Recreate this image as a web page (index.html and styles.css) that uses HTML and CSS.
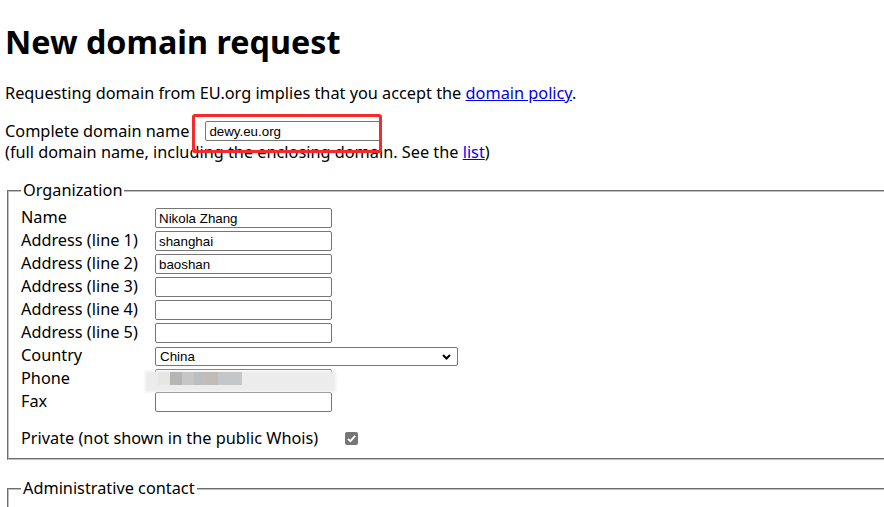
FILE: index.html
```html
<!DOCTYPE html>
<html lang="en">
<head>
<meta charset="utf-8">
<title>New domain request</title>
<link rel="stylesheet" href="styles.css">
</head>
<body>
<div class="page">
  <h1 class="title">New domain request</h1>
  <p class="intro">Requesting domain from EU.org implies that you accept the <a href="#">domain policy</a>.</p>

  <div class="domain-row">
    <span class="domain-label">Complete domain name</span>
    <span class="domain-field">
      <input class="field" type="text" value="dewy.eu.org">
      <span class="highlight"></span>
    </span>
  </div>
  <div class="domain-note">(full domain name, including the enclosing domain. See the <a href="#">list</a>)</div>

  <fieldset class="group">
    <legend class="group-title">Organization</legend>
    <div class="form-grid">
      <label class="lbl">Name</label><input class="field" type="text" value="Nikola Zhang">
      <label class="lbl">Address (line 1)</label><input class="field" type="text" value="shanghai">
      <label class="lbl">Address (line 2)</label><input class="field" type="text" value="baoshan">
      <label class="lbl">Address (line 3)</label><input class="field" type="text" value="">
      <label class="lbl">Address (line 4)</label><input class="field" type="text" value="">
      <label class="lbl">Address (line 5)</label><input class="field" type="text" value="">
      <label class="lbl">Country</label>
      <span class="select-wrap">
        <select class="select"><option>China</option></select>
        <svg class="chevron" width="9" height="6" viewBox="0 0 9 6"><path d="M1 1 L4.5 4.5 L8 1" fill="none" stroke="#000" stroke-width="2"/></svg>
      </span>
      <label class="lbl">Phone</label>
      <span class="phone-wrap">
        <input class="field" type="text" value="">
        <span class="mosaic">
          <span class="m-band"></span>
          <span class="m-cell c1"></span><span class="m-cell c2"></span><span class="m-cell c3"></span><span class="m-cell c4"></span><span class="m-cell c5"></span><span class="m-cell c6"></span>
        </span>
      </span>
      <label class="lbl">Fax</label><input class="field" type="text" value="">
    </div>
    <div class="private-row">
      <span class="private-label">Private (not shown in the public Whois)</span>
      <span class="checkbox"><svg width="13" height="13" viewBox="0 0 13 13"><path d="M3 6.8 L5.4 9.2 L10.2 3.8" fill="none" stroke="#fff" stroke-width="1.9"/></svg></span>
    </div>
  </fieldset>

  <fieldset class="group group-admin">
    <legend class="group-title">Administrative contact</legend>
  </fieldset>
</div>
</body>
</html>
```
FILE: styles.css
```css
html, body {
  margin: 0;
  padding: 0;
  overflow: hidden;
  background: #fff;
}
body {
  font-family: "Noto Sans", "Open Sans", sans-serif;
  font-size: 16.3px;
  line-height: 21px;
  color: #000;
}
.page {
  width: 920px;
  padding-left: 5px;
}
a { color: #0000ee; text-decoration: underline; }

.title {
  font-size: 32.3px;
  line-height: 44px;
  font-weight: 700;
  margin: 19px 0 20px;
}
.intro {
  margin: 0 0 16px;
}

.domain-row {
  display: flex;
  align-items: center;
  height: 22px;
}
.domain-label { margin-right: 16px; }
.domain-field { position: relative; display: inline-flex; }
.highlight {
  position: absolute;
  left: -13px;
  top: -7px;
  width: 190px;
  height: 39px;
  border: 3px solid #f52a2a;
  border-radius: 3px;
  box-sizing: border-box;
}
.domain-note { margin: 0; }

.field {
  box-sizing: border-box;
  width: 177px;
  height: 20px;
  border: 1px solid #767676;
  border-radius: 2px;
  padding: 0 3px;
  font-family: "Liberation Sans", Arial, sans-serif;
  font-size: 13.33px;
  color: #000;
  background: #fff;
  margin: 0;
}

.group {
  margin: 17px 0 0 2px;
  padding: 7px 12px 9px;
  border: 2px groove #c0c0c0;
  min-width: 0;
}
.group-title {
  padding: 0 2px;
  line-height: 21px;
}
.group-admin {
  margin-top: 18px;
  padding: 0 12px 20px;
}

.form-grid {
  display: grid;
  grid-template-columns: 134px auto;
  grid-auto-rows: 20px;
  row-gap: 3px;
  justify-items: start;
  align-items: start;
}
.lbl {
  line-height: 19px;
  white-space: nowrap;
}

.select-wrap {
  position: relative;
  display: flex;
  padding-top: 1px;
}
.select {
  -webkit-appearance: none;
  appearance: none;
  box-sizing: border-box;
  width: 303px;
  height: 19px;
  border: 1px solid #767676;
  border-radius: 2px;
  padding: 0 4px;
  font-family: "Liberation Sans", Arial, sans-serif;
  font-size: 13.33px;
  background: #fff;
  color: #000;
  margin: 0;
}
.chevron {
  position: absolute;
  right: 7px;
  top: 8px;
  pointer-events: none;
}

.phone-wrap { position: relative; display: flex; }
.mosaic {
  position: absolute;
  left: -10px;
  top: -1px;
  width: 191px;
  height: 26px;
  pointer-events: none;
}
.m-band {
  position: absolute;
  left: 0; top: 3px;
  width: 191px; height: 21px;
  background: #ececec;
  filter: blur(1.5px);
}
.m-cell {
  position: absolute;
  top: 4px;
  height: 13px;
  width: 12px;
}
.c1 { left: 13px; background: #e6e6e2; }
.c2 { left: 25px; background: #b5b5b5; }
.c3 { left: 37px; background: #c6c6c6; }
.c4 { left: 49px; background: #bdbec0; }
.c5 { left: 61px; background: #c2bcb9; }
.c6 { left: 73px; width: 24px; background: #c4c7ca; }

.private-row {
  display: flex;
  align-items: center;
  margin-top: 16px;
  height: 21px;
}
.private-label { margin-right: 27px; }
.checkbox {
  display: inline-flex;
  width: 13px;
  height: 13px;
  background: #767676;
  border-radius: 2px;
}
```
